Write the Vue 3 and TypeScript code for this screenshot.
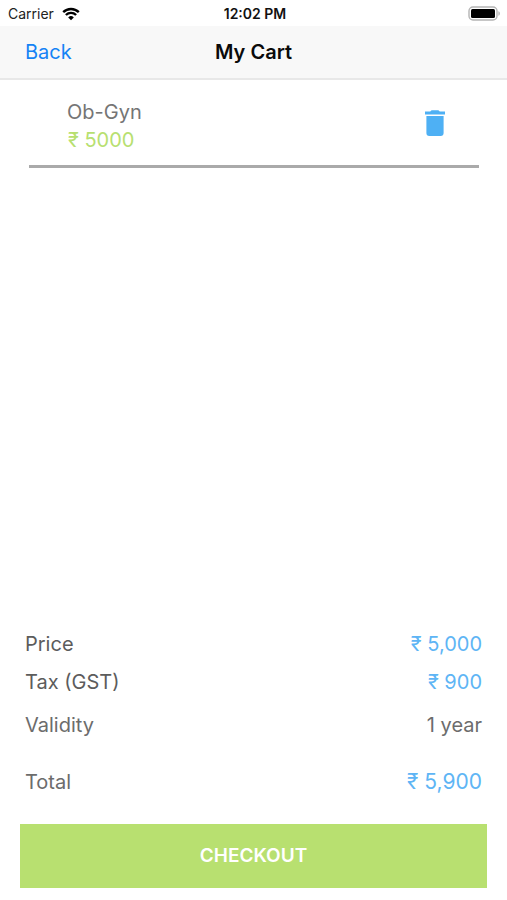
<script setup lang="ts">
import { computed, ref } from 'vue'

interface CartItem {
  id: number
  name: string
  price: number
}

const items = ref<CartItem[]>([{ id: 1, name: 'Ob-Gyn', price: 5000 }])

const TAX_RATE = 0.18

const price = computed(() => items.value.reduce((sum, item) => sum + item.price, 0))
const tax = computed(() => Math.round(price.value * TAX_RATE))
const total = computed(() => price.value + tax.value)

function rupees(amount: number): string {
  return `₹ ${amount.toLocaleString('en-IN')}`
}

function removeItem(id: number): void {
  items.value = items.value.filter((item) => item.id !== id)
}
</script>

<template>
  <div class="screen">
    <div class="status">
      <div class="carrier">
        <span>Carrier</span>
        <svg class="wifi" viewBox="0 0 18 14" aria-hidden="true">
          <path d="M1.2 5.1a11.2 11.2 0 0 1 15.6 0" />
          <path d="M3.9 8a7.3 7.3 0 0 1 10.2 0" />
          <path class="dot" d="M9 13.2 6.2 10.4a4 4 0 0 1 5.6 0z" />
        </svg>
      </div>
      <span class="time">12:02 PM</span>
      <svg class="battery" viewBox="0 0 34 16" aria-hidden="true">
        <rect class="shell" x="1" y="1" width="28" height="13" rx="4" />
        <rect class="charge" x="3" y="3" width="24" height="9" rx="1.5" />
        <path class="cap" d="M30.5 5.2c1.6.5 1.6 4.1 0 4.6z" />
      </svg>
    </div>

    <header class="nav">
      <a class="back" href="#">Back</a>
      <h1 class="title">My Cart</h1>
    </header>

    <main class="content">
      <ul class="items">
        <li v-for="item in items" :key="item.id" class="item">
          <div>
            <div class="name">{{ item.name }}</div>
            <div class="cost">₹ {{ item.price }}</div>
          </div>
          <button class="remove" type="button" :aria-label="`Remove ${item.name}`" @click="removeItem(item.id)">
            <svg class="trash" viewBox="0 0 20 26" aria-hidden="true">
              <path d="M0 1.6h5.2L6.6.3h6.8l1.4 1.3H20v3H0zM1.4 6h17.2v17a2.9 2.9 0 0 1-2.9 2.9H4.3A2.9 2.9 0 0 1 1.4 23z" />
            </svg>
          </button>
        </li>
      </ul>

      <dl class="summary">
        <div class="row dark">
          <dt>Price</dt>
          <dd class="amount">{{ rupees(price) }}</dd>
        </div>
        <div class="row dark">
          <dt>Tax (GST)</dt>
          <dd class="amount">{{ rupees(tax) }}</dd>
        </div>
        <div class="row validity">
          <dt>Validity</dt>
          <dd>1 year</dd>
        </div>
        <div class="row total">
          <dt>Total</dt>
          <dd class="amount">{{ rupees(total) }}</dd>
        </div>
      </dl>

      <button class="checkout" type="button">CHECKOUT</button>
    </main>
  </div>
</template>

<style>
body {
  background: #fff;
}
</style>

<style scoped>
.screen {
  display: flex;
  flex-direction: column;
  min-height: 100vh;
  background: #fff;
  color: #6c6c6c;
  font-family: Inter, Roboto, sans-serif;
  font-size: 20px;
  line-height: 28px;
}

.status {
  display: grid;
  grid-template-columns: 1fr auto 1fr;
  align-items: center;
  height: 26px;
  padding: 0 5px 0 8px;
  color: #222;
  font-size: 14px;
  line-height: 28px;
}

.carrier {
  display: flex;
  align-items: center;
  gap: 8px;
}

.wifi {
  width: 18px;
  height: 14px;
  fill: none;
  stroke: #000;
  stroke-width: 2.4;
}

.wifi .dot {
  fill: #000;
  stroke: none;
}

.time {
  color: #111;
  font-weight: 600;
}

.battery {
  justify-self: end;
  width: 34px;
  height: 16px;
}

.shell {
  fill: #fff;
  stroke: #b4b4b4;
  stroke-width: 1.4;
}

.charge {
  fill: #000;
}

.cap {
  fill: #a0a0a0;
}

.nav {
  display: grid;
  grid-template-columns: 1fr auto 1fr;
  align-items: center;
  height: 52px;
  padding: 0 25px;
  border-bottom: 2px solid #e8e8e8;
  background: #f8f8f8;
}

.back {
  justify-self: start;
  color: #1583f5;
  text-decoration: none;
}

.title {
  margin: 0;
  color: #0a0a0a;
  font-size: 20px;
  font-weight: 600;
}

.content {
  display: flex;
  flex: 1;
  flex-direction: column;
  padding: 0 20px 12px;
}

.items {
  flex: 1;
  margin: 0 8px 0 9px;
  padding: 0;
  list-style: none;
}

.item {
  display: flex;
  align-items: center;
  justify-content: space-between;
  padding: 18px 34px 11px 38px;
  border-bottom: 3px solid #aaa;
}

.name {
  color: #757575;
}

.cost {
  padding-left: 1px;
  color: #b7e070;
}

.remove {
  display: block;
  padding: 0 0 6px;
  border: 0;
  background: none;
  cursor: pointer;
}

.trash {
  display: block;
  width: 20px;
  height: 26px;
  fill: #4eb0f4;
}

.summary {
  display: flex;
  flex-direction: column;
  gap: 10px;
  margin: 0;
  padding: 0 5px;
}

.row {
  display: flex;
  justify-content: space-between;
}

.row dd {
  margin: 0;
}

.dark {
  color: #5c5c5c;
}

.validity {
  padding-top: 5px;
}

.total {
  padding-top: 19px;
}

.row .amount {
  color: #5eb5f5;
}

.total .amount {
  font-size: 21px;
}

.checkout {
  height: 64px;
  margin-top: 28px;
  border: 0;
  background: #b8e070;
  color: #fff;
  font: inherit;
  font-size: 19px;
  font-weight: 600;
  cursor: pointer;
}
</style>
